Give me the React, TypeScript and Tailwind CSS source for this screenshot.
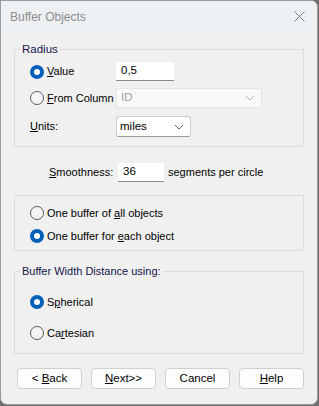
import React from 'react'

const font = { fontFamily: '"Liberation Sans", Arial, sans-serif' }

function Radio({ checked, children }: { checked?: boolean; children: React.ReactNode }) {
  return (
    <div className="flex items-center gap-[3px] whitespace-nowrap text-[11px] text-black">
      {checked ? (
        <span className="flex h-[14px] w-[14px] shrink-0 items-center justify-center rounded-full bg-[#005fb8]">
          <span className="h-[6px] w-[6px] rounded-full bg-white" />
        </span>
      ) : (
        <span className="h-[14px] w-[14px] shrink-0 rounded-full border border-[#5a5a5a] bg-[#f5f5f5]" />
      )}
      <span>{children}</span>
    </div>
  )
}

function Chevron({ color = '#606060' }: { color?: string }) {
  return (
    <svg width="10" height="6" viewBox="0 0 10 6" fill="none">
      <path d="M1 1l4 4 4-4" stroke={color} strokeWidth="1" />
    </svg>
  )
}

function Btn({ children }: { children: React.ReactNode }) {
  return (
    <button className="flex h-[21px] w-[65px] items-center justify-center rounded-[4px] border border-[#d0d0d0] bg-[#fdfdfd] text-[11.5px] text-black">
      <span className="whitespace-pre">{children}</span>
    </button>
  )
}

export default function App() {
  return (
    <div className="h-[406px] w-[319px] bg-[#6e6e6e]" style={font}>
      <div className="flex h-[405px] w-[318px] flex-col overflow-hidden rounded-tr-[7px] rounded-b-[7px] border border-[#9a9a9a] bg-[#f0f0f0]">
        {/* title bar */}
        <div className="flex h-[31px] items-center justify-between bg-[#eef1f4] pl-[9px] pr-[12px]">
          <span className="text-[12px] text-[#8c8c8c]">Buffer Objects</span>
          <svg width="11" height="11" viewBox="0 0 11 11">
            <path d="M0.5 0.5l10 10M10.5 0.5l-10 10" stroke="#7a7a7a" strokeWidth="1" />
          </svg>
        </div>

        <div className="flex flex-col px-[13px] pt-[9px]">
          {/* Radius group */}
          <fieldset className="h-[106px] border border-[#dcdcdc] px-[15px]">
            <legend className="ml-[-10px] px-[2px] text-[11.5px] leading-[17px] text-[#14144a]">Radius</legend>
            <div className="mt-[4px] flex items-center">
              <div className="w-[86px] shrink-0">
                <Radio checked>
                  <u>V</u>alue
                </Radio>
              </div>
              <div className="flex h-[19px] w-[58px] items-center border-b border-[#8a8a8a] bg-white pl-[5px] text-[11.5px]">
                0,5
              </div>
            </div>
            <div className="mt-[7px] flex items-center">
              <div className="w-[86px] shrink-0">
                <Radio>
                  <u>F</u>rom Column
                </Radio>
              </div>
              <div className="flex h-[20px] w-[146px] items-center justify-between border border-[#e6e6e6] bg-[#f9f9f9] pl-[4px] pr-[6px] text-[11.5px] text-[#a0a0a0]">
                ID
                <Chevron color="#b5b5b5" />
              </div>
            </div>
            <div className="mt-[8px] flex items-center">
              <div className="w-[86px] shrink-0 text-[11px]">
                <u>U</u>nits:
              </div>
              <div className="flex h-[21px] w-[75px] items-center justify-between rounded-[3px] border border-[#cccccc] border-b-[#9a9a9a] bg-white pl-[3px] pr-[6px] text-[11.5px]">
                miles
                <Chevron />
              </div>
            </div>
          </fieldset>

          {/* smoothness */}
          <div className="mt-[16px] flex items-center text-[11px]">
            <span className="ml-[35px] w-[69px]">
              <u>S</u>moothness:
            </span>
            <div className="flex h-[19px] w-[46px] items-center border-b border-[#8a8a8a] bg-white pl-[5px] text-[11.5px]">36</div>
            <span className="ml-[4px]">segments per circle</span>
          </div>

          {/* buffer type group */}
          <div className="mt-[13px] flex h-[56px] flex-col gap-[6px] border border-[#dcdcdc] pl-[15px] pt-[9px]">
            <Radio>
              One buffer of <u>a</u>ll objects
            </Radio>
            <Radio checked>
              One buffer for <u>e</u>ach object
            </Radio>
          </div>

          {/* distance group */}
          <fieldset className="mt-[12px] h-[91px] border border-[#dcdcdc] px-[15px]">
            <legend className="ml-[-10px] px-[2px] text-[11px] leading-[17px] text-[#14144a]">Buffer Width Distance using:</legend>
            <div className="mt-[14px] flex flex-col gap-[14px]">
              <Radio checked>
                S<u>p</u>herical
              </Radio>
              <Radio>
                Ca<u>r</u>tesian
              </Radio>
            </div>
          </fieldset>

          {/* buttons */}
          <div className="mt-[14px] flex gap-[9px] pl-[3px]">
            <Btn>
              {'< '}
              <u>B</u>ack
            </Btn>
            <Btn>
              <u>N</u>ext&gt;&gt;
            </Btn>
            <Btn>Cancel</Btn>
            <Btn>
              <u>H</u>elp
            </Btn>
          </div>
        </div>
      </div>
    </div>
  )
}
